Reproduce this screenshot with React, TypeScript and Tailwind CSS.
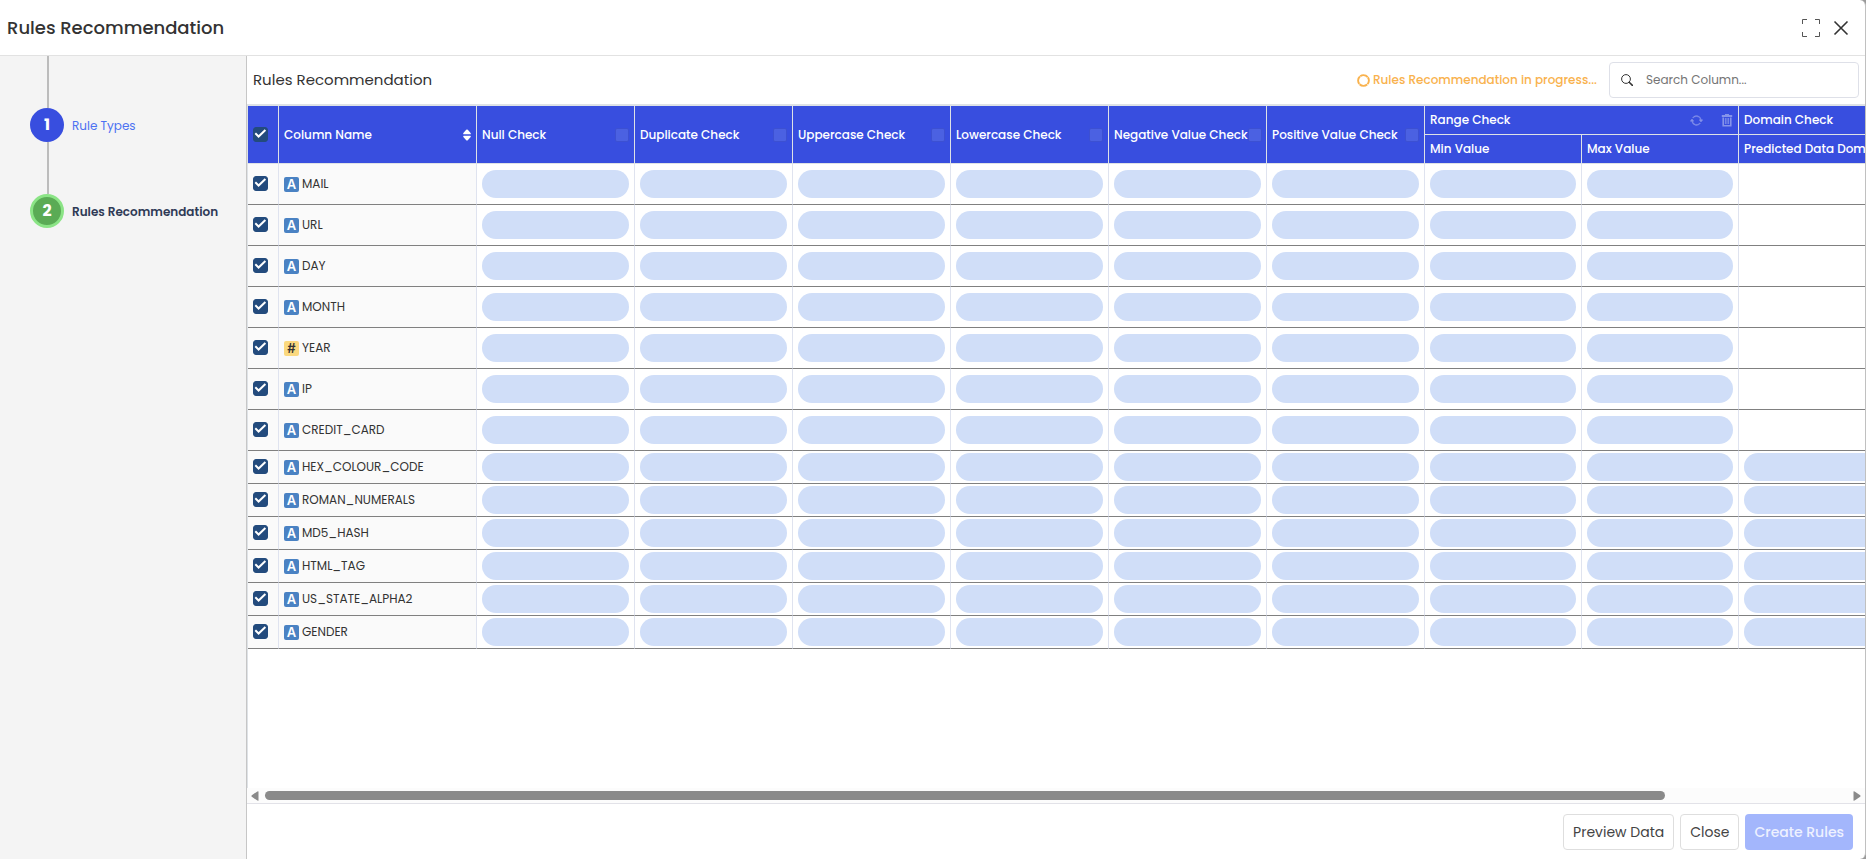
import React, { useState } from "react"
import { clsx } from "clsx"

type ColumnType = "text" | "number"

interface DataColumn {
    name: string
    type: ColumnType
    predicting: boolean
}

const COLUMNS: DataColumn[] = [
    { name: "MAIL", type: "text", predicting: false },
    { name: "URL", type: "text", predicting: false },
    { name: "DAY", type: "text", predicting: false },
    { name: "MONTH", type: "text", predicting: false },
    { name: "YEAR", type: "number", predicting: false },
    { name: "IP", type: "text", predicting: false },
    { name: "CREDIT_CARD", type: "text", predicting: false },
    { name: "HEX_COLOUR_CODE", type: "text", predicting: true },
    { name: "ROMAN_NUMERALS", type: "text", predicting: true },
    { name: "MD5_HASH", type: "text", predicting: true },
    { name: "HTML_TAG", type: "text", predicting: true },
    { name: "US_STATE_ALPHA2", type: "text", predicting: true },
    { name: "GENDER", type: "text", predicting: true },
]

const CHECKS = [
    "Null Check",
    "Duplicate Check",
    "Uppercase Check",
    "Lowercase Check",
    "Negative Value Check",
    "Positive Value Check",
]

export default function App() {
    const [selected, setSelected] = useState<string[]>(COLUMNS.map((c) => c.name))
    const [query, setQuery] = useState("")

    const rows = COLUMNS.filter((c) => c.name.toLowerCase().includes(query.toLowerCase()))

    const toggle = (name: string) =>
        setSelected((prev) => (prev.includes(name) ? prev.filter((n) => n !== name) : [...prev, name]))

    const toggleAll = () => setSelected(selected.length === COLUMNS.length ? [] : COLUMNS.map((c) => c.name))

    return (
        <div className="h-screen bg-[#9a9a9a] font-['Poppins','Inter',sans-serif] text-[#333333]">
            <div className="flex h-full flex-col overflow-hidden rounded-r-md border-r border-[#c0c0c0] bg-white">
                <header className="flex h-14 shrink-0 items-center justify-between border-b border-[#e2e2e2] pl-[7px] pr-4">
                    <h1 className="text-lg font-medium">Rules Recommendation</h1>
                    <div className="flex items-center gap-3">
                        <button aria-label="Full screen">
                            <ExpandIcon />
                        </button>
                        <button aria-label="Close dialog">
                            <CloseIcon />
                        </button>
                    </div>
                </header>

                <div className="flex min-h-0 flex-1">
                    <Stepper />

                    <main className="flex min-w-0 flex-1 flex-col">
                        <div className="flex h-12 shrink-0 items-center justify-between pl-1.5 pr-1.5">
                            <h2 className="text-[15px]">Rules Recommendation</h2>
                            <div className="flex items-center gap-3">
                                <div className="flex items-center gap-[3px] text-xs font-medium text-[#f9b24d]">
                                    <SpinnerIcon />
                                    <span>Rules Recommendation in progress...</span>
                                </div>
                                <label className="flex h-9 w-[250px] items-center gap-[13px] rounded border border-[#dee0e8] pl-[11px] pr-3">
                                    <SearchIcon />
                                    <input
                                        aria-label="Search Column"
                                        value={query}
                                        onChange={(e) => setQuery(e.target.value)}
                                        placeholder="Search Column..."
                                        className="min-w-0 flex-1 text-xs outline-none placeholder:text-[#757575]"
                                    />
                                </label>
                            </div>
                        </div>

                        <div className="min-h-0 flex-1 overflow-hidden border-l border-t-2 border-[#dee2e6]">
                            <table className="w-[1837px] table-fixed border-separate border-spacing-0">
                                <colgroup>
                                    <col className="w-[31px]" />
                                    <col className="w-[198px]" />
                                    {CHECKS.map((c) => (
                                        <col key={c} className="w-[158px]" />
                                    ))}
                                    <col className="w-[157px]" />
                                    <col className="w-[157px]" />
                                    <col />
                                </colgroup>
                                <thead>
                                    <tr className="h-[29px]">
                                        <HeadCell rowSpan={2}>
                                            <Checkbox
                                                label="Select all columns"
                                                checked={selected.length === COLUMNS.length}
                                                onChange={toggleAll}
                                            />
                                        </HeadCell>
                                        <HeadCell rowSpan={2}>
                                            <div className="flex items-center justify-between">
                                                <span>Column Name</span>
                                                <button aria-label="Sort by column name">
                                                    <SortIcon />
                                                </button>
                                            </div>
                                        </HeadCell>
                                        {CHECKS.map((c) => (
                                            <HeadCell key={c} rowSpan={2}>
                                                <div className="flex items-center justify-between">
                                                    <span className="whitespace-nowrap">{c}</span>
                                                    <input
                                                        type="checkbox"
                                                        disabled
                                                        aria-label={c}
                                                        className="size-3.5 shrink-0 appearance-none rounded-xs border border-[#3c50d2] bg-[#4b61e2]"
                                                    />
                                                </div>
                                            </HeadCell>
                                        ))}
                                        <HeadCell colSpan={2}>
                                            <div className="flex items-center justify-between">
                                                <span>Range Check</span>
                                                <div className="flex items-center gap-[18px] text-[#8593ea]">
                                                    <button disabled aria-label="Refresh range check">
                                                        <RefreshIcon />
                                                    </button>
                                                    <button disabled aria-label="Delete range check">
                                                        <TrashIcon />
                                                    </button>
                                                </div>
                                            </div>
                                        </HeadCell>
                                        <HeadCell>Domain Check</HeadCell>
                                    </tr>
                                    <tr className="h-[29px]">
                                        <HeadCell>Min Value</HeadCell>
                                        <HeadCell>Max Value</HeadCell>
                                        <HeadCell>Predicted Data Domain</HeadCell>
                                    </tr>
                                </thead>
                                <tbody>
                                    {rows.map((row) => (
                                        <tr key={row.name} className={row.predicting ? "h-[33px]" : "h-[41px]"}>
                                            <BodyCell pinned>
                                                <Checkbox
                                                    label={row.name}
                                                    checked={selected.includes(row.name)}
                                                    onChange={() => toggle(row.name)}
                                                />
                                            </BodyCell>
                                            <BodyCell pinned>
                                                <div className="flex items-center gap-[3px]">
                                                    <TypeBadge type={row.type} />
                                                    <span className="text-xs">{row.name}</span>
                                                </div>
                                            </BodyCell>
                                            {[...CHECKS, "Min Value", "Max Value"].map((c) => (
                                                <BodyCell key={c}>
                                                    <Skeleton />
                                                </BodyCell>
                                            ))}
                                            <BodyCell>{row.predicting && <Skeleton />}</BodyCell>
                                        </tr>
                                    ))}
                                </tbody>
                            </table>
                        </div>

                        <ScrollTrack />

                        <footer className="flex h-14 shrink-0 items-center justify-end gap-1.5 border-t border-[#e2e2e8] pr-3">
                            <button className="h-9 rounded border border-[#dedede] px-[9px] text-sm text-[#444444]">
                                Preview Data
                            </button>
                            <button className="h-9 rounded border border-[#dedede] px-[9px] text-sm text-[#444444]">
                                Close
                            </button>
                            <button disabled className="h-9 rounded bg-[#a3b6fc] px-[9px] text-sm font-medium text-[#eef1ff]">
                                Create Rules
                            </button>
                        </footer>
                    </main>
                </div>
            </div>
        </div>
    )
}

function Stepper() {
    return (
        <nav className="w-[247px] shrink-0 border-r border-[#c6c6c6] bg-[#f4f4f4] pl-[30px]">
            <ol>
                <li>
                    <div className="ml-[17px] h-[52px] w-0.5 bg-[#bcbcbc]" />
                    <a href="#rule-types" className="flex items-center gap-2 text-xs text-[#4c72f2]">
                        <span className="flex size-[34px] items-center justify-center rounded-full bg-[#384edf] text-base font-bold text-white">
                            1
                        </span>
                        <span className="pt-0.5">Rule Types</span>
                    </a>
                </li>
                <li>
                    <div className="ml-[17px] h-[52px] w-0.5 bg-[#bcbcbc]" />
                    <a
                        href="#rules-recommendation"
                        aria-current="step"
                        className="flex items-center gap-2 text-xs font-semibold text-[#2f3a56]"
                    >
                        <span className="flex size-[34px] items-center justify-center rounded-full border-3 border-[#8be486] bg-[#5aab55] text-base font-bold text-white">
                            2
                        </span>
                        <span className="pt-0.5">Rules Recommendation</span>
                    </a>
                </li>
            </ol>
        </nav>
    )
}

function HeadCell({ children, rowSpan, colSpan }: { children: React.ReactNode; rowSpan?: number; colSpan?: number }) {
    return (
        <th
            rowSpan={rowSpan}
            colSpan={colSpan}
            className="border-b border-r border-[#dee2e6] bg-[#384edf] px-[5px] text-left align-middle text-xs font-medium whitespace-nowrap text-white"
        >
            {children}
        </th>
    )
}

function BodyCell({ children, pinned = false }: { children?: React.ReactNode; pinned?: boolean }) {
    return (
        <td
            className={clsx(
                "border-b border-r border-b-[#808080] border-r-[#dfe3ef] px-[5px] align-middle",
                pinned && "bg-[#fafafa]"
            )}
        >
            {children}
        </td>
    )
}

function Skeleton() {
    return <div className="h-7 rounded-full bg-[#d0def8]" />
}

function Checkbox({ label, checked, onChange }: { label: string; checked: boolean; onChange: () => void }) {
    return (
        <span className="grid h-4 w-[15px]">
            <input
                type="checkbox"
                aria-label={label}
                checked={checked}
                onChange={onChange}
                className="col-start-1 row-start-1 size-[15px] appearance-none rounded-[3px] border border-[#234b7d] bg-white checked:bg-[#234b7d]"
            />
            {checked && (
                <svg viewBox="0 0 15 15" className="pointer-events-none col-start-1 row-start-1 size-[15px]" fill="none">
                    <path d="M2.3 6.3L5.6 9.5L12.4 3" stroke="white" strokeWidth="2" />
                </svg>
            )}
        </span>
    )
}

function TypeBadge({ type }: { type: ColumnType }) {
    return (
        <span
            className={clsx(
                "flex size-[15px] items-center justify-center rounded-xs font-['Inter',sans-serif] text-[13px] font-semibold leading-none",
                type === "text" ? "bg-[#4a82c3] text-white" : "bg-[#fbd97f] text-[#333333]"
            )}
        >
            {type === "text" ? "A" : "#"}
        </span>
    )
}

// Horizontal scroll bar under the grid
function ScrollTrack() {
    return (
        <div className="flex h-[15px] shrink-0 items-center gap-1.5 bg-[#fcfcfc] px-1">
            <svg viewBox="0 0 8 10" className="h-2.5 w-2" fill="#8a8a8a">
                <path d="M7.5 .5V9.5Q7 10 6 9.3L.8 5.8Q0 5 .8 4.2L6 .7Q7 0 7.5 .5Z" />
            </svg>
            <div className="flex-1">
                <div className="h-[9px] w-[88.5%] rounded-full bg-[#8a8a8a]" />
            </div>
            <svg viewBox="0 0 8 10" className="h-2.5 w-2" fill="#8a8a8a">
                <path d="M.5 .5V9.5Q1 10 2 9.3L7.2 5.8Q8 5 7.2 4.2L2 .7Q1 0 .5 .5Z" />
            </svg>
        </div>
    )
}

function ExpandIcon() {
    return (
        <svg viewBox="0 0 20 20" className="size-5" fill="none" stroke="#555555" strokeWidth="1">
            <path d="M1.5 6V1.5H6M14 1.5H18.5V6M18.5 14V18.5H14M6 18.5H1.5V14" />
        </svg>
    )
}

function CloseIcon() {
    return (
        <svg viewBox="0 0 16 16" className="size-4" fill="none" stroke="#333333" strokeWidth="1.6">
            <path d="M1.5 1.5L14.5 14.5M14.5 1.5L1.5 14.5" />
        </svg>
    )
}

function SpinnerIcon() {
    return (
        <svg viewBox="0 0 13 13" className="size-[13px]" fill="none" stroke="currentColor" strokeWidth="1.9">
            <circle cx="6.5" cy="6.5" r="5.4" strokeDasharray="8.1 .38" strokeDashoffset="4.1" />
        </svg>
    )
}

function SearchIcon() {
    return (
        <svg viewBox="0 0 12 12" className="size-3" fill="none" stroke="#333333">
            <circle cx="5" cy="5" r="4.4" strokeWidth="1" />
            <path d="M8.2 8.2L11.4 11.4" strokeWidth="1.5" strokeLinecap="round" />
        </svg>
    )
}

function SortIcon() {
    return (
        <svg viewBox="0 0 8 12" className="h-3 w-2" fill="white">
            <path d="M4 .4Q4.4 .4 4.8 .8L7.6 4Q8.2 5.2 7.2 5.3H.8Q-.2 5.2 .4 4L3.2 .8Q3.6 .4 4 .4Z" />
            <path d="M4 11.6Q4.4 11.6 4.8 11.2L7.6 8Q8.2 6.8 7.2 6.7H.8Q-.2 6.8 .4 8L3.2 11.2Q3.6 11.6 4 11.6Z" />
        </svg>
    )
}

function RefreshIcon() {
    return (
        <svg viewBox="0 0 16 16" className="size-[13px]" fill="currentColor" stroke="currentColor" strokeWidth=".5">
            <path d="M11.534 7h3.932a.25.25 0 0 1 .192.41l-1.966 2.36a.25.25 0 0 1-.384 0l-1.966-2.36a.25.25 0 0 1 .192-.41m-11 2h3.932a.25.25 0 0 0 .192-.41L2.692 6.23a.25.25 0 0 0-.384 0L.342 8.59A.25.25 0 0 0 .534 9" />
            <path d="M8 3c-1.552 0-2.94.707-3.857 1.818a.5.5 0 1 1-.771-.636A6.002 6.002 0 0 1 13.917 7H12.9A5 5 0 0 0 8 3M3.1 9a5.002 5.002 0 0 0 8.757 2.182.5.5 0 1 1 .771.636A6.002 6.002 0 0 1 2.083 9z" />
        </svg>
    )
}

function TrashIcon() {
    return (
        <svg viewBox="0 0 12 13" className="h-[13px] w-3" fill="none" stroke="currentColor">
            <path d="M.8 2H11.2" strokeWidth="1.8" />
            <path d="M4 .7H8" strokeWidth="1.2" />
            <path d="M2.2 3.5V11.8H9.8V3.5" strokeWidth="1.6" />
            <path d="M4.4 4V10M6 4V10M7.6 4V10" strokeWidth=".9" />
        </svg>
    )
}
